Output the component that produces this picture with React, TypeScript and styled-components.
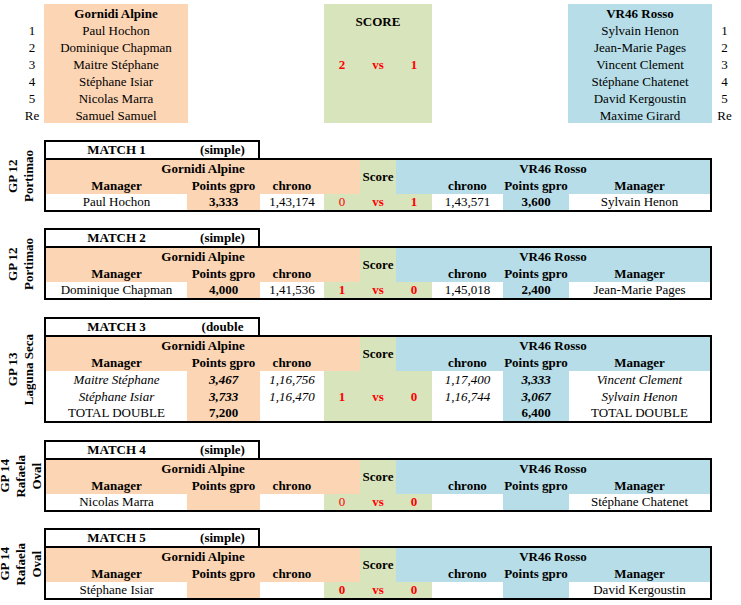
import React from "react";
import styled, { createGlobalStyle, css } from "styled-components";

const ORANGE = "#FCD5B4";
const GREEN = "#D8E4BC";
const BLUE = "#B7DEE8";
const WHITE = "#FFFFFF";

const GlobalStyle = createGlobalStyle`
  html, body {
    margin: 0;
    padding: 0;
    background: #ffffff;
  }
  body {
    font-family: "Liberation Serif", "Times New Roman", serif;
    font-size: 13px;
    color: #000;
  }
`;

const Page = styled.div`
  width: 741px;
  padding-top: 4px;
  display: flex;
  flex-direction: column;
`;

/* ---------- Top summary ---------- */

const TopSection = styled.div`
  display: flex;
  align-items: flex-start;
`;

const TopColumn = styled.div<{ $width: number; $bg?: string; $padLeft?: number; $bold?: boolean }>`
  width: ${(p) => p.$width}px;
  padding-left: ${(p) => p.$padLeft ?? 0}px;
  box-sizing: border-box;
  background: ${(p) => p.$bg ?? "transparent"};
  display: grid;
  grid-template-rows: repeat(7, 17px);
`;

const TopCell = styled.div<{ $bold?: boolean }>`
  display: flex;
  align-items: center;
  justify-content: center;
  box-sizing: border-box;
  padding-top: 2px;
  white-space: nowrap;
  font-weight: ${(p) => (p.$bold ? 700 : 400)};
`;

const ScoreBox = styled.div`
  width: 108px;
  margin: 0 136px;
  background: ${GREEN};
  display: grid;
  grid-template-columns: repeat(3, 36px);
  grid-template-rows: repeat(7, 17px);
`;

const ScoreTitle = styled.div`
  grid-column: 1 / 4;
  grid-row: 1 / 3;
  display: flex;
  align-items: center;
  justify-content: center;
  padding-top: 2px;
  font-weight: 700;
`;

const ScoreValue = styled.div<{ $col: number; $row: number; $bold?: boolean }>`
  grid-column: ${(p) => p.$col};
  grid-row: ${(p) => p.$row};
  display: flex;
  align-items: center;
  justify-content: center;
  padding-top: 2px;
  color: #ff0000;
  font-weight: ${(p) => (p.$bold === false ? 400 : 700)};
`;

/* ---------- Match blocks ---------- */

const MatchBlock = styled.div<{ $mt: number }>`
  display: flex;
  margin-top: ${(p) => p.$mt}px;
`;

const GpLabel = styled.div`
  width: 42px;
  margin-right: 2px;
  display: flex;
  align-items: center;
  justify-content: center;
`;

const GpText = styled.span`
  writing-mode: vertical-rl;
  transform: rotate(180deg);
  line-height: 16px;
  font-weight: 700;
  text-align: center;
  white-space: nowrap;
`;

const MatchBody = styled.div`
  display: flex;
  flex-direction: column;
`;

const MatchTitle = styled.div`
  display: grid;
  grid-template-columns: 141px 71px;
  height: 16px;
  width: max-content;
  border: 2px solid #000;
  border-bottom: none;
`;

const TitleCell = styled.div`
  display: flex;
  align-items: center;
  justify-content: center;
  font-weight: 700;
  white-space: nowrap;
`;

const Table = styled.div<{ $rows: string }>`
  display: grid;
  grid-template-columns: 141px 73px 64px 36px 36px 36px 71px 66px 141px;
  grid-template-rows: ${(p) => p.$rows};
  border: 2px solid #000;
  width: max-content;
`;

type CellProps = {
  $bg: string;
  $bold?: boolean;
  $italic?: boolean;
  $red?: boolean;
  $col?: string;
  $row?: string;
};

const Cell = styled.div<CellProps>`
  display: flex;
  align-items: center;
  justify-content: center;
  white-space: nowrap;
  background: ${(p) => p.$bg};
  font-weight: ${(p) => (p.$bold ? 700 : 400)};
  font-style: ${(p) => (p.$italic ? "italic" : "normal")};
  color: ${(p) => (p.$red ? "#ff0000" : "#000")};
  ${(p) =>
    p.$col &&
    css`
      grid-column: ${p.$col};
    `}
  ${(p) =>
    p.$row &&
    css`
      grid-row: ${p.$row};
    `}
`;

type DataRow = {
  leftName: string;
  leftPts: string;
  leftChrono: string;
  scoreL?: string;
  scoreLBold?: boolean;
  vs?: boolean;
  scoreR?: string;
  rightChrono: string;
  rightPts: string;
  rightName: string;
  italic?: boolean;
};

type Match = {
  title: string;
  kind: string;
  gp: string[];
  mt: number;
  rows: DataRow[];
};

const matches: Match[] = [
  {
    title: "MATCH 1",
    kind: "(simple)",
    gp: ["GP 12", "Portimao"],
    mt: 17,
    rows: [
      {
        leftName: "Paul Hochon",
        leftPts: "3,333",
        leftChrono: "1,43,174",
        scoreL: "0",
        scoreLBold: false,
        vs: true,
        scoreR: "1",
        rightChrono: "1,43,571",
        rightPts: "3,600",
        rightName: "Sylvain Henon",
      },
    ],
  },
  {
    title: "MATCH 2",
    kind: "(simple)",
    gp: ["GP 12", "Portimao"],
    mt: 16,
    rows: [
      {
        leftName: "Dominique Chapman",
        leftPts: "4,000",
        leftChrono: "1,41,536",
        scoreL: "1",
        vs: true,
        scoreR: "0",
        rightChrono: "1,45,018",
        rightPts: "2,400",
        rightName: "Jean-Marie Pages",
      },
    ],
  },
  {
    title: "MATCH 3",
    kind: "(double",
    gp: ["GP 13", "Laguna Seca"],
    mt: 17,
    rows: [
      {
        leftName: "Maitre Stéphane",
        leftPts: "3,467",
        leftChrono: "1,16,756",
        rightChrono: "1,17,400",
        rightPts: "3,333",
        rightName: "Vincent Clement",
        italic: true,
      },
      {
        leftName: "Stéphane Isiar",
        leftPts: "3,733",
        leftChrono: "1,16,470",
        scoreL: "1",
        vs: true,
        scoreR: "0",
        rightChrono: "1,16,744",
        rightPts: "3,067",
        rightName: "Sylvain Henon",
        italic: true,
      },
      {
        leftName: "TOTAL DOUBLE",
        leftPts: "7,200",
        leftChrono: "",
        rightChrono: "",
        rightPts: "6,400",
        rightName: "TOTAL DOUBLE",
      },
    ],
  },
  {
    title: "MATCH 4",
    kind: "(simple)",
    gp: ["GP 14", "Rafaela", "Oval"],
    mt: 17,
    rows: [
      {
        leftName: "Nicolas Marra",
        leftPts: "",
        leftChrono: "",
        scoreL: "0",
        scoreLBold: false,
        vs: true,
        scoreR: "0",
        rightChrono: "",
        rightPts: "",
        rightName: "Stéphane Chatenet",
      },
    ],
  },
  {
    title: "MATCH 5",
    kind: "(simple)",
    gp: ["GP 14", "Rafaela", "Oval"],
    mt: 16,
    rows: [
      {
        leftName: "Stéphane Isiar",
        leftPts: "",
        leftChrono: "",
        scoreL: "0",
        vs: true,
        scoreR: "0",
        rightChrono: "",
        rightPts: "",
        rightName: "David Kergoustin",
      },
    ],
  },
];

const leftTeam = ["Paul Hochon", "Dominique Chapman", "Maitre Stéphane", "Stéphane Isiar", "Nicolas Marra", "Samuel Samuel"];
const rightTeam = ["Sylvain Henon", "Jean-Marie Pages", "Vincent Clement", "Stéphane Chatenet", "David Kergoustin", "Maxime Girard"];
const nums = ["1", "2", "3", "4", "5", "Re"];

function MatchTable({ m }: { m: Match }) {
  const dataHeights = m.rows.map((_, i) => (i === m.rows.length - 1 ? "16px" : "17px")).join(" ");
  return (
    <MatchBlock $mt={m.mt}>
      <GpLabel>
        <GpText>
          {m.gp.map((line, i) => (
            <React.Fragment key={i}>
              {i > 0 && <br />}
              {line}
            </React.Fragment>
          ))}
        </GpText>
      </GpLabel>
      <MatchBody>
        <MatchTitle>
          <TitleCell>{m.title}</TitleCell>
          <TitleCell>{m.kind}</TitleCell>
        </MatchTitle>
        <Table $rows={`17px 17px ${dataHeights}`}>
          <Cell $bg={ORANGE} $bold $col="1 / 5" $row="1">
            Gornidi Alpine
          </Cell>
          <Cell $bg={GREEN} $bold $col="5" $row="1 / 3">
            Score
          </Cell>
          <Cell $bg={BLUE} $bold $col="6 / 10" $row="1">
            VR46 Rosso
          </Cell>
          <Cell $bg={ORANGE} $bold $col="1" $row="2">
            Manager
          </Cell>
          <Cell $bg={ORANGE} $bold $col="2" $row="2">
            Points gpro
          </Cell>
          <Cell $bg={ORANGE} $bold $col="3" $row="2">
            chrono
          </Cell>
          <Cell $bg={ORANGE} $col="4" $row="2" />
          <Cell $bg={BLUE} $col="6" $row="2" />
          <Cell $bg={BLUE} $bold $col="7" $row="2">
            chrono
          </Cell>
          <Cell $bg={BLUE} $bold $col="8" $row="2">
            Points gpro
          </Cell>
          <Cell $bg={BLUE} $bold $col="9" $row="2">
            Manager
          </Cell>
          {m.rows.map((r, i) => (
            <React.Fragment key={i}>
              <Cell $bg={WHITE} $italic={r.italic}>
                {r.leftName}
              </Cell>
              <Cell $bg={ORANGE} $bold $italic={r.italic}>
                {r.leftPts}
              </Cell>
              <Cell $bg={WHITE} $italic={r.italic}>
                {r.leftChrono}
              </Cell>
              <Cell $bg={GREEN} $red $bold={r.scoreLBold !== false}>
                {r.scoreL ?? ""}
              </Cell>
              <Cell $bg={GREEN} $red $bold>
                {r.vs ? "vs" : ""}
              </Cell>
              <Cell $bg={GREEN} $red $bold>
                {r.scoreR ?? ""}
              </Cell>
              <Cell $bg={WHITE} $italic={r.italic}>
                {r.rightChrono}
              </Cell>
              <Cell $bg={BLUE} $bold $italic={r.italic}>
                {r.rightPts}
              </Cell>
              <Cell $bg={WHITE} $italic={r.italic}>
                {r.rightName}
              </Cell>
            </React.Fragment>
          ))}
        </Table>
      </MatchBody>
    </MatchBlock>
  );
}

export default function App() {
  return (
    <>
      <GlobalStyle />
      <Page>
        <TopSection>
          <TopColumn $width={44} $padLeft={20}>
            <TopCell />
            {nums.map((n) => (
              <TopCell key={n}>{n}</TopCell>
            ))}
          </TopColumn>
          <TopColumn $width={144} $bg={ORANGE}>
            <TopCell $bold>Gornidi Alpine</TopCell>
            {leftTeam.map((n) => (
              <TopCell key={n}>{n}</TopCell>
            ))}
          </TopColumn>
          <ScoreBox>
            <ScoreTitle>SCORE</ScoreTitle>
            <ScoreValue $col={1} $row={4}>
              2
            </ScoreValue>
            <ScoreValue $col={2} $row={4}>
              vs
            </ScoreValue>
            <ScoreValue $col={3} $row={4}>
              1
            </ScoreValue>
          </ScoreBox>
          <TopColumn $width={144} $bg={BLUE}>
            <TopCell $bold>VR46 Rosso</TopCell>
            {rightTeam.map((n) => (
              <TopCell key={n}>{n}</TopCell>
            ))}
          </TopColumn>
          <TopColumn $width={25}>
            <TopCell />
            {nums.map((n) => (
              <TopCell key={n}>{n}</TopCell>
            ))}
          </TopColumn>
        </TopSection>
        {matches.map((m) => (
          <MatchTable key={m.title} m={m} />
        ))}
      </Page>
    </>
  );
}
